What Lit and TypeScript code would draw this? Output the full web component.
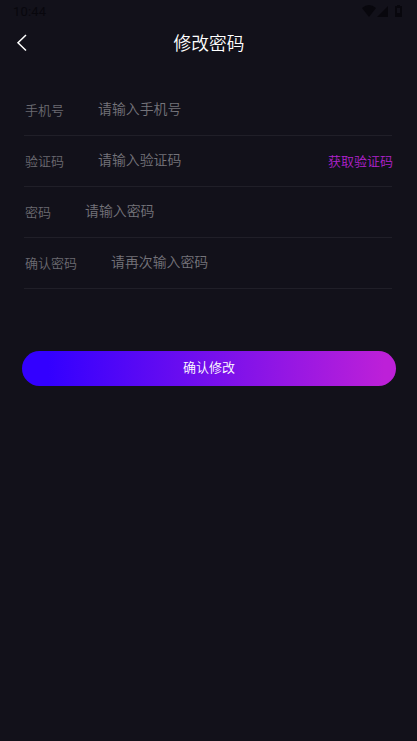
import { LitElement, html, css } from "lit";

class AppRoot extends LitElement {
  static styles = css`
    :host { display: block; height: 741px; overflow: hidden; background: #12111a; color: #fff;
      font-family: "Noto Sans CJK SC", sans-serif; font-weight: 350; }
    .status { height: 24px; box-sizing: border-box; padding: 0 13px; display: flex; justify-content: space-between; align-items: center;
      color: #08070d; font: 400 13px/24px Roboto, sans-serif; letter-spacing: .2px; }
    .icons { display: block; }
    .nav { height: 37px; display: grid; grid-template-columns: 44px 1fr 44px; align-items: center; }
    .back { display: block; margin-left: 16px; }
    h1 { margin: 0 0 0 1px; text-align: center; font-size: 17.7px; font-weight: 350; line-height: 37px; }
    .form { padding: 24px 25px 0 24px; }
    .row { height: 50px; border-bottom: 1px solid #201f28; display: flex; font-size: 13px; line-height: 50px; }
    .label { color: #6b6a71; padding-left: 1px; }
    .hint { margin-left: 34px; color: #75747a; font-size: 13.9px; line-height: 46px; flex: 1; }
    .code { color: #b022cc; font-size: 13px; margin-right: -1px; }
    .submit { margin: 61.5px 21px 0 22px; height: 35.5px; border-radius: 18px; text-align: center;
      background: linear-gradient(90deg, #3300ff 7%, #bd20d8 97%); font-size: 13px; line-height: 32px; }
  `;

  rows = [
    ["手机号", "请输入手机号"],
    ["验证码", "请输入验证码", "获取验证码"],
    ["密码", "请输入密码"],
    ["确认密码", "请再次输入密码"],
  ];

  render() {
    return html`
      <div class="status"><span>10:44</span>
        <svg class="icons" width="44" height="24" viewBox="0 0 44 24" fill="#08070d">
          <path d="M2 8Q9 2 16 8L9 17Z"/><path d="M28 6V17H17Z"/><path fill-rule="evenodd" d="M35 6h2V5h3v1h2v11h-7zM37 8v5h3V8z"/>
        </svg>
      </div>
      <div class="nav">
        <svg class="back" width="12" height="18" viewBox="0 0 12 18" fill="none" stroke="#fff" stroke-width="1.5"><path d="M10 1L2 8.7L10 16.5"/></svg>
        <h1>修改密码</h1>
      </div>
      <div class="form">
        ${this.rows.map(([l, h, c]) => html`<div class="row"><span class="label">${l}</span><span class="hint">${h}</span>${c ? html`<span class="code">${c}</span>` : ""}</div>`)}
      </div>
      <div class="submit">确认修改</div>
    `;
  }
}
customElements.define("app-root", AppRoot);
